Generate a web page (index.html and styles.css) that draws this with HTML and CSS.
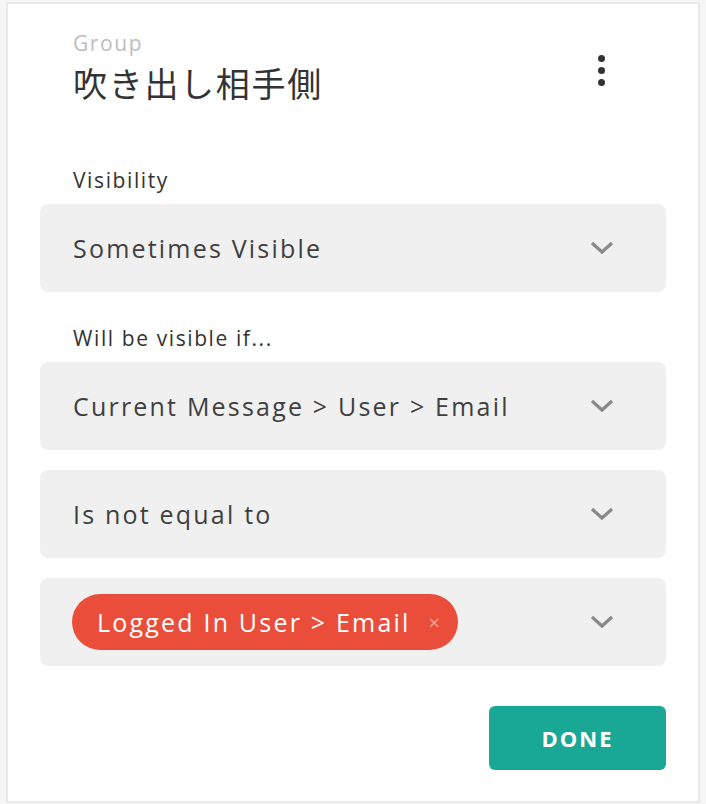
FILE: index.html
```html
<!DOCTYPE html>
<html lang="en">
<head>
    <meta charset="UTF-8">
    <meta name="viewport" content="width=device-width, initial-scale=1.0">
    <title>Group Visibility</title>
    <link rel="stylesheet" href="styles.css">
</head>
<body>
    <div class="panel">
        <div class="panel-header">
            <div class="titles">
                <div class="kind">Group</div>
                <h1 class="name">吹き出し相手側</h1>
            </div>
            <button class="menu-btn" aria-label="More">
                <span></span><span></span><span></span>
            </button>
        </div>

        <label class="field-label">Visibility</label>
        <div class="select">
            <span class="select-value">Sometimes Visible</span>
            <svg class="chevron" viewBox="0 0 24 14" width="24" height="14"><path d="M2 2 L12 11 L22 2" /></svg>
        </div>

        <label class="field-label">Will be visible if...</label>
        <div class="select">
            <span class="select-value">Current Message &gt; User &gt; Email</span>
            <svg class="chevron" viewBox="0 0 24 14" width="24" height="14"><path d="M2 2 L12 11 L22 2" /></svg>
        </div>
        <div class="select">
            <span class="select-value">Is not equal to</span>
            <svg class="chevron" viewBox="0 0 24 14" width="24" height="14"><path d="M2 2 L12 11 L22 2" /></svg>
        </div>
        <div class="select">
            <span class="pill">Logged In User &gt; Email <span class="pill-x">×</span></span>
            <svg class="chevron" viewBox="0 0 24 14" width="24" height="14"><path d="M2 2 L12 11 L22 2" /></svg>
        </div>

        <div class="actions">
            <button class="done-btn">DONE</button>
        </div>
    </div>
</body>
</html>
```

FILE: styles.css
```css
body {
    margin: 0;
    background-color: #f6f6f6;
    font-family: "Open Sans", "Noto Sans CJK JP", sans-serif;
    color: #3a3a3a;
}

.panel {
    box-sizing: border-box;
    width: 694px;
    height: 801px;
    margin: 2px 0 0 6px;
    background-color: #fff;
    border: 2px solid #e9e9e9;
    padding: 25px 32px 0 32px;
}

.panel-header {
    display: flex;
    justify-content: space-between;
    align-items: flex-start;
    padding-left: 33px;
    margin-bottom: 60px;
}

.kind {
    font-size: 21px;
    letter-spacing: 1.6px;
    color: #bdbdbd;
    line-height: 28px;
}

.name {
    margin: 3px 0 0;
    font-family: "Noto Sans CJK JP", sans-serif;
    font-weight: 400;
    font-size: 34px;
    letter-spacing: 1.7px;
    line-height: 46px;
    color: #333;
}

.menu-btn {
    display: flex;
    flex-direction: column;
    gap: 5px;
    background: none;
    border: none;
    padding: 0;
    margin: 26px 61px 0 0;
}

.menu-btn span {
    width: 7px;
    height: 7px;
    border-radius: 50%;
    background-color: #333;
}

.field-label {
    display: block;
    padding-left: 33px;
    font-size: 21px;
    letter-spacing: 1.6px;
    line-height: 28px;
    color: #333;
    margin-bottom: 10px;
}

.select {
    display: flex;
    align-items: center;
    justify-content: space-between;
    height: 88px;
    background-color: #f0f0f0;
    border-radius: 8px;
    padding: 0 52px 0 33px;
    margin-bottom: 20px;
}

.select + .field-label {
    margin-top: 32px;
}

.select-value {
    font-size: 25px;
    letter-spacing: 2.2px;
    color: #3f3f3f;
}

.chevron path {
    fill: none;
    stroke: #8a8a8a;
    stroke-width: 3.2;
}

.pill {
    display: inline-flex;
    align-items: center;
    height: 56px;
    margin-left: -1px;
    padding: 0 18px 0 25px;
    border-radius: 28px;
    background-color: #ea4e3a;
    color: #fff;
    font-size: 25px;
    letter-spacing: 2.2px;
}

.pill-x {
    margin-left: 18px;
    font-size: 20px;
    letter-spacing: 0;
    color: #f5a89c;
}

.actions {
    display: flex;
    justify-content: flex-end;
    margin-top: 40px;
}

.done-btn {
    width: 177px;
    height: 64px;
    border: none;
    border-radius: 6px;
    background-color: #1aa896;
    color: #fff;
    font-family: "Open Sans", sans-serif;
    font-weight: 700;
    font-size: 22px;
    letter-spacing: 2px;
}
```
